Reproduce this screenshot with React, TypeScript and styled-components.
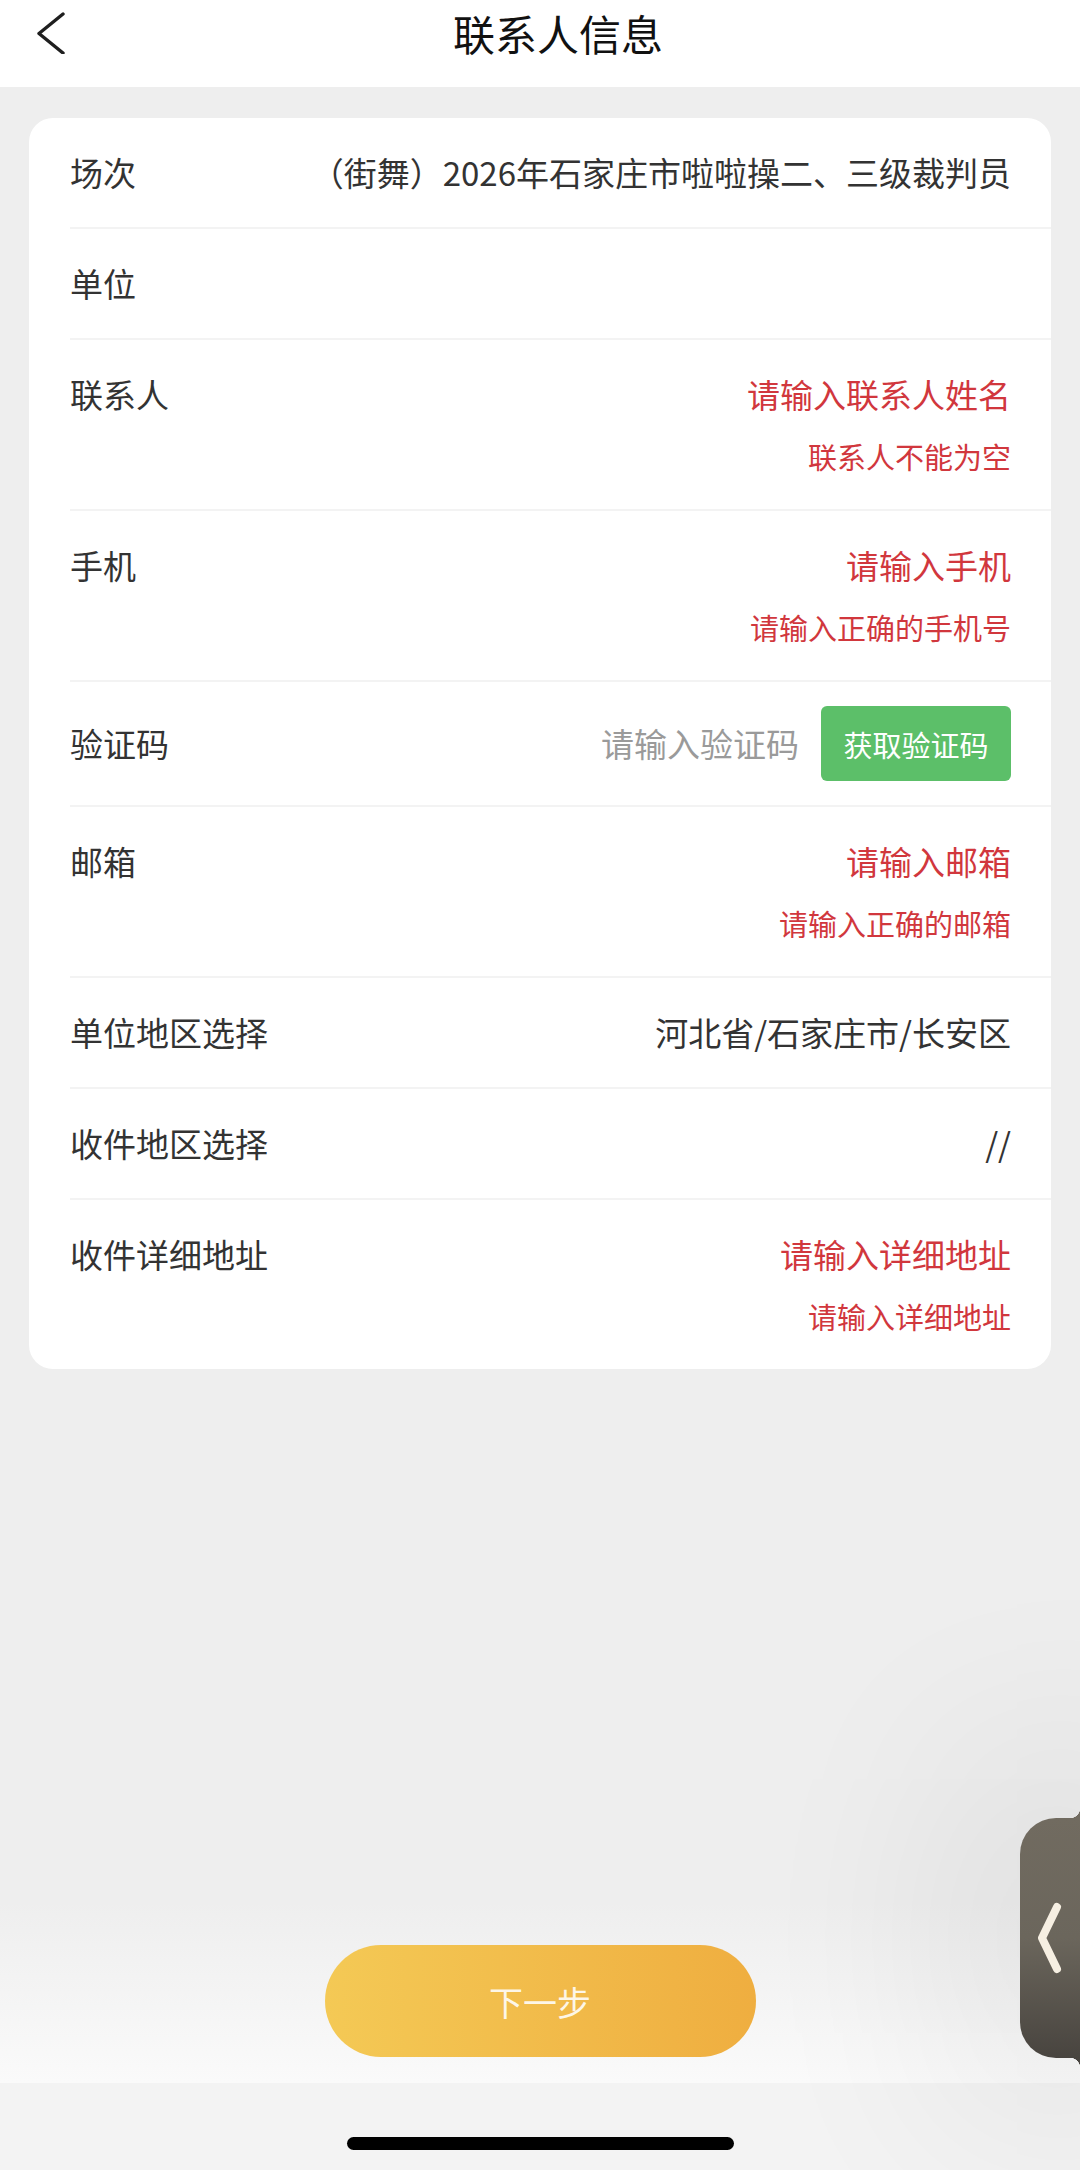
import { createGlobalStyle, styled } from "styled-components";

// 表单行数据：hint 为校验提示，tone 决定右侧文字颜色
type Field = {
  label: string;
  value: string;
  tone: "plain" | "error";
  hint?: string;
};

const fields: Field[] = [
  { label: "场次", value: "（街舞）2026年石家庄市啦啦操二、三级裁判员", tone: "plain" },
  { label: "单位", value: "", tone: "plain" },
  { label: "联系人", value: "请输入联系人姓名", tone: "error", hint: "联系人不能为空" },
  { label: "手机", value: "请输入手机", tone: "error", hint: "请输入正确的手机号" },
];

const moreFields: Field[] = [
  { label: "邮箱", value: "请输入邮箱", tone: "error", hint: "请输入正确的邮箱" },
  { label: "单位地区选择", value: "河北省/石家庄市/长安区", tone: "plain" },
  { label: "收件地区选择", value: "//", tone: "plain" },
  { label: "收件详细地址", value: "请输入详细地址", tone: "error", hint: "请输入详细地址" },
];

export default function App() {
  const renderRow = (f: Field) => (
    <Row key={f.label}>
      <Label>{f.label}</Label>
      <FieldBox>
        <Value $tone={f.tone}>{f.value}</Value>
        {f.hint && <Hint>{f.hint}</Hint>}
      </FieldBox>
    </Row>
  );

  return (
    <Page>
      <GlobalStyle />
      <Header>
        <BackButton aria-label="返回">
          <svg width="30" height="42" viewBox="0 0 30 42" fill="none">
            <polyline
              points="27,2 3,21.5 27,41"
              stroke="#1f1f1f"
              strokeWidth="3.4"
              strokeLinecap="round"
              strokeLinejoin="round"
            />
          </svg>
        </BackButton>
        <Title>联系人信息</Title>
        <span />
      </Header>

      <Body>
        <Card>
          {fields.map(renderRow)}
          <CodeRow>
            <Label>验证码</Label>
            <CodeInput>请输入验证码</CodeInput>
            <CodeButton>获取验证码</CodeButton>
          </CodeRow>
          {moreFields.map(renderRow)}
        </Card>
      </Body>

      <Footer>
        <NextButton>下一步</NextButton>
      </Footer>
      <SafeArea>
        <HomeBar />
      </SafeArea>

      <SideTab>
        <svg width="26" height="72" viewBox="0 0 26 72" fill="none">
          <polyline
            points="21,5 6,36 21,67"
            stroke="#f6efe2"
            strokeWidth="8"
            strokeLinecap="round"
            strokeLinejoin="round"
          />
        </svg>
      </SideTab>
    </Page>
  );
}

const GlobalStyle = createGlobalStyle`
  * { box-sizing: border-box; }
  body {
    margin: 0;
    background: #eeeeee;
    font-family: "Noto Sans CJK SC", "Noto Sans", sans-serif;
  }
`;

const Page = styled.div`
  position: relative;
  width: 1080px;
  min-height: 2170px;
  display: flex;
  flex-direction: column;
  background: #eeeeee;
  overflow: hidden;
`;

const Header = styled.header`
  height: 87px;
  padding: 0 0 22px 36px;
  display: grid;
  grid-template-columns: 1fr auto 1fr;
  align-items: center;
  background: #ffffff;
`;

const BackButton = styled.div`
  display: flex;
  align-items: center;
  width: 40px;
  height: 44px;
`;

const Title = styled.h1`
  margin: 0;
  font-size: 42px;
  font-weight: 400;
  color: #111111;
  line-height: 56px;
`;

const Body = styled.main`
  flex: 1;
  padding: 31px 29px 0;
`;

const Card = styled.section`
  background: #ffffff;
  border-radius: 24px;
  overflow: hidden;
`;

const Row = styled.div`
  display: flex;
  align-items: flex-start;
  margin-left: 41px;
  padding: 30px 40px 30px 0;
  border-bottom: 2px solid #f3f3f3;

  &:last-child {
    border-bottom: none;
  }
`;

const CodeRow = styled(Row)`
  align-items: center;
  padding: 24px 40px 24px 0;
`;

const Label = styled.div`
  width: 228px;
  flex-shrink: 0;
  font-size: 33px;
  line-height: 49px;
  color: #333333;
`;

const FieldBox = styled.div`
  flex: 1;
  min-width: 0;
  display: flex;
  flex-direction: column;
  align-items: flex-end;
`;

const Value = styled.div<{ $tone: "plain" | "error" }>`
  max-width: 100%;
  min-height: 49px;
  font-size: 33px;
  line-height: 49px;
  white-space: nowrap;
  overflow: hidden;
  color: ${({ $tone }) => ($tone === "error" ? "#d1373d" : "#333333")};
`;

const Hint = styled.div`
  margin-top: 14px;
  font-size: 29px;
  line-height: 46px;
  color: #d1373d;
`;

const CodeInput = styled.div`
  flex: 1;
  text-align: right;
  font-size: 33px;
  line-height: 49px;
  color: #9a9a9a;
`;

const CodeButton = styled.div`
  margin-left: 22px;
  width: 190px;
  height: 75px;
  border-radius: 6px;
  background: #5cbf69;
  color: #ffffff;
  font-size: 29px;
  display: flex;
  align-items: center;
  justify-content: center;
`;

const Footer = styled.footer`
  height: 183px;
  padding-top: 45px;
  display: flex;
  justify-content: center;
  background: linear-gradient(to bottom, rgba(250, 250, 250, 0), #fafafa);
`;

const NextButton = styled.button`
  width: 431px;
  height: 112px;
  border: none;
  border-radius: 56px;
  background: linear-gradient(to right, #f4c955, #efae40);
  color: rgba(255, 255, 255, 0.88);
  font-family: inherit;
  font-size: 34px;
`;

const SafeArea = styled.div`
  height: 87px;
  padding-top: 54px;
  display: flex;
  justify-content: center;
  background: #f3f3f3;
`;

const HomeBar = styled.div`
  width: 387px;
  height: 13px;
  border-radius: 7px;
  background: #000000;
`;

const SideTab = styled.div`
  position: absolute;
  top: 1818px;
  right: 0;
  width: 60px;
  height: 240px;
  border-radius: 36px 0 0 36px;
  background: linear-gradient(to bottom, #716b60, #6b665c 50%, #48443f);
  box-shadow: 0 0 200px 90px rgba(0, 0, 0, 0.06);
  display: flex;
  align-items: center;
  padding-left: 16px;

  &::before,
  &::after {
    content: "";
    position: absolute;
    right: 0;
    width: 10px;
    height: 10px;
  }

  &::before {
    top: -10px;
    background: radial-gradient(circle at 0 0, transparent 10px, #716b60 10.5px);
  }

  &::after {
    bottom: -10px;
    background: radial-gradient(circle at 0 100%, transparent 10px, #48443f 10.5px);
  }
`;
